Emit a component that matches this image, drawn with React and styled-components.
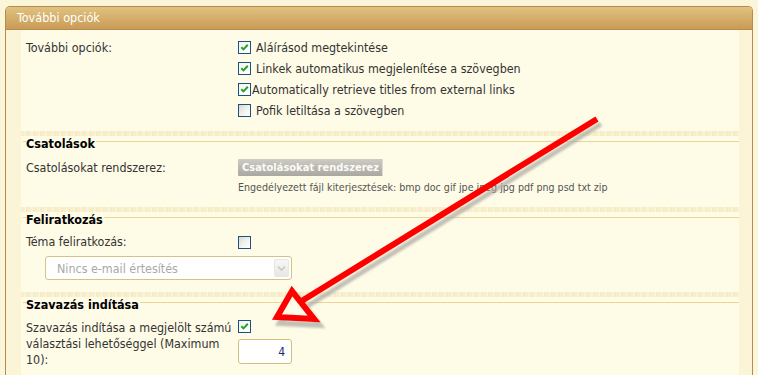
import React from 'react';
import styled, { createGlobalStyle } from 'styled-components';

const Global = createGlobalStyle`
  html, body { margin: 0; padding: 0; background: #fbf5da; }
  body {
    font-family: "DejaVu Sans Condensed", "DejaVu Sans", Verdana, sans-serif;
    font-size: 12.4px;
    color: #333;
  }
`;

const Page = styled.div`
  position: relative;
  width: 758px;
  height: 375px;
  overflow: hidden;
  padding: 6px 5px 0;
  box-sizing: border-box;
`;

const Panel = styled.section`
  height: 100%;
  display: flex;
  flex-direction: column;
  border: 1px solid #b98a4b;
  border-bottom: none;
  border-radius: 5px 5px 0 0;
  background: #fbf4d6;
  overflow: hidden;
`;

const Header = styled.h2`
  margin: 0;
  height: 22px;
  line-height: 22px;
  padding-left: 11px;
  background: linear-gradient(#e0c281, #c99b56);
  border-bottom: 1px solid #b98a4b;
  color: #fff;
  font-size: 12.5px;
  font-weight: normal;
`;

const Body = styled.div`
  flex: 1;
  display: flex;
  padding: 0 13px 0 15px;
`;

const Content = styled.div`
  flex: 1;
  background: #fefbe6;
  display: flex;
  flex-direction: column;
`;

const Section = styled.div`
  padding-top: ${p => p.$top || 0}px;
  padding-bottom: ${p => p.$bottom || 0}px;
`;

const Band = styled.div`
  height: 5px;
  background: repeating-linear-gradient(90deg, #f8eecb 0 3px, #fbf3d6 3px 5px, #f6ebc4 5px 7px);
`;

const SectionHead = styled.div`
  display: flex;
  align-items: flex-start;
  margin-left: 2px;
  height: 15px;
  &::before {
    content: "";
    width: 3px;
    height: 1px;
    margin-top: 5px;
    background: #ebd690;
  }
  &::after {
    content: "";
    flex: 1;
    height: 1px;
    margin-top: 5px;
    margin-left: 1px;
    background: #ebd690;
  }
`;

const HeadText = styled.h3`
  margin: 0;
  font-size: 12.5px;
  line-height: 15px;
  font-weight: bold;
  color: #000;
`;

const Row = styled.div`
  display: grid;
  grid-template-columns: 212px 1fr;
  padding-left: 5px;
  margin-top: ${p => p.$mt || 0}px;
  align-items: ${p => p.$align || 'center'};
`;

const Label = styled.div`
  line-height: ${p => p.$lh || 21}px;
  color: #333;
`;

const Controls = styled.div`
  display: flex;
  flex-direction: column;
  align-items: flex-start;
  gap: ${p => p.$gap || 0}px;
`;

const Option = styled.label`
  display: flex;
  align-items: center;
  height: 21px;
  gap: ${p => p.$gap ?? 5}px;
  color: #333;
`;

const Box = styled.span`
  display: inline-flex;
  align-items: center;
  justify-content: center;
  flex: none;
  width: 13px;
  height: 13px;
  box-sizing: border-box;
  border: 1px solid #1c5180;
  background: ${p => p.$checked
    ? 'linear-gradient(135deg, #f2f2ee 0%, #ffffff 70%)'
    : 'linear-gradient(135deg, #d8d8d2 0%, #f3f3f0 55%, #ffffff 100%)'};
`;

function Check({ checked }) {
  return (
    <Box $checked={checked}>
      {checked && (
        <svg width="9" height="9" viewBox="0 0 9 9">
          <path d="M1.3 4.2 L3.5 6.4 L7.8 1.8" fill="none" stroke="#22a522" strokeWidth="2" />
        </svg>
      )}
    </Box>
  );
}

const Button = styled.button`
  height: 17px;
  padding: 0 4px;
  border: none;
  border-radius: 1px;
  background: linear-gradient(#cdcbc3, #a9a79f);
  box-shadow: inset -1px 0 0 #dedcd5;
  color: #fbfbf8;
  font-family: inherit;
  font-size: 11px;
  font-weight: bold;
  line-height: 17px;
`;

const Hint = styled.div`
  margin-top: 2px;
  margin-left: 217px;
  font-size: 10.6px;
  line-height: 14px;
  color: #555;
`;

const SelectBox = styled.div`
  margin: 4px 0 0 24px;
  width: 247px;
  height: 24px;
  box-sizing: border-box;
  border: 1px solid #d7c283;
  border-radius: 3px;
  background: #fff;
  display: flex;
  align-items: center;
  justify-content: space-between;
  padding: 0 2px 0 11px;
  color: #a8a8a8;
`;

const DropBtn = styled.span`
  width: 15px;
  height: 18px;
  box-sizing: border-box;
  border: 1px solid #e6e6e4;
  border-radius: 2px;
  background: linear-gradient(#f7f7f5, #e6e6e2);
  display: flex;
  align-items: center;
  justify-content: center;
`;

const NumberInput = styled.input`
  width: 54px;
  height: 25px;
  box-sizing: border-box;
  border: 1px solid #d5bf7e;
  border-radius: 3px;
  background: #fff;
  text-align: right;
  padding: 0 6px 0 0;
  font-family: inherit;
  font-size: 12px;
  color: #1a2a6a;
  outline: none;
`;

const Overlay = styled.svg`
  position: absolute;
  left: 0;
  top: 0;
  pointer-events: none;
`;

function Arrow() {
  return (
    <Overlay width="758" height="375" viewBox="0 0 758 375">
      <defs>
        <filter id="blur" x="-10%" y="-10%" width="120%" height="120%">
          <feGaussianBlur stdDeviation="1" />
        </filter>
      </defs>
      <g filter="url(#blur)" opacity="0.7">
        <line x1="601" y1="124" x2="306" y2="307" stroke="#a9a8a2" strokeWidth="5" />
        <polygon points="280,323 296,296 303,305 319,325" fill="none" stroke="#a9a8a2" strokeWidth="6" strokeLinejoin="miter" strokeMiterlimit="3" />
      </g>
      <line x1="597" y1="119" x2="300" y2="302" stroke="#ff0000" strokeWidth="6" />
      <polygon points="277,317 292,291 299,300 314,319" fill="#fefbe6" stroke="#ff0000" strokeWidth="6" strokeLinejoin="miter" strokeMiterlimit="3" />
    </Overlay>
  );
}

export default function App() {
  return (
    <>
      <Global />
      <Page>
        <Panel>
          <Header>További opciók</Header>
          <Body>
            <Content>
              <Section $top={7} $bottom={10}>
                <Row $align="start">
                  <Label>További opciók:</Label>
                  <Controls>
                    <Option><Check checked />Aláírásod megtekintése</Option>
                    <Option><Check checked />Linkek automatikus megjelenítése a szövegben</Option>
                    <Option $gap={1}><Check checked />Automatically retrieve titles from external links</Option>
                    <Option><Check />Pofik letiltása a szövegben</Option>
                  </Controls>
                </Row>
              </Section>
              <Band />
              <Section $bottom={13}>
                <SectionHead><HeadText>Csatolások</HeadText></SectionHead>
                <Row $mt={6}>
                  <Label $lh={21}>Csatolásokat rendszerez:</Label>
                  <Controls>
                    <Button type="button">Csatolásokat rendszerez</Button>
                  </Controls>
                </Row>
                <Hint>Engedélyezett fájl kiterjesztések: bmp doc gif jpe jpeg jpg pdf png psd txt zip</Hint>
              </Section>
              <Band />
              <Section $bottom={12}>
                <SectionHead><HeadText>Feliratkozás</HeadText></SectionHead>
                <Row $mt={5}>
                  <Label $lh={20}>Téma feliratkozás:</Label>
                  <Controls><Check /></Controls>
                </Row>
                <SelectBox>
                  <span>Nincs e-mail értesítés</span>
                  <DropBtn>
                    <svg width="9" height="7" viewBox="0 0 9 7">
                      <path d="M1 1.5 L4.5 5 L8 1.5" fill="none" stroke="#c8c8c4" strokeWidth="1.6" />
                    </svg>
                  </DropBtn>
                </SelectBox>
              </Section>
              <Band />
              <Section>
                <SectionHead><HeadText>Szavazás indítása</HeadText></SectionHead>
                <Row $mt={8} $align="start">
                  <Label $lh={16}>Szavazás indítása a megjelölt számú választási lehetőséggel (Maximum 10):</Label>
                  <Controls $gap={6}>
                    <Check checked />
                    <NumberInput type="text" defaultValue="4" readOnly />
                  </Controls>
                </Row>
              </Section>
            </Content>
          </Body>
        </Panel>
        <Arrow />
      </Page>
    </>
  );
}
